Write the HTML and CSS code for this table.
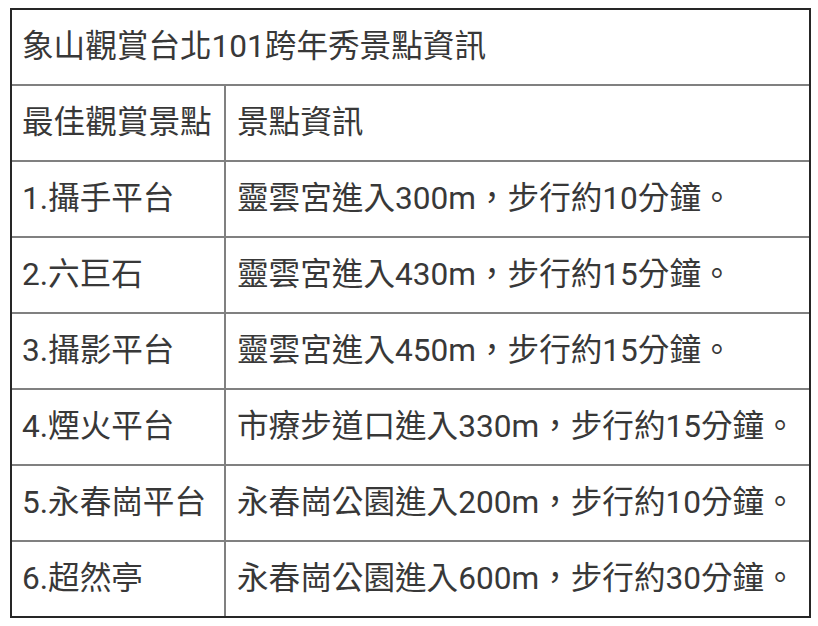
FILE: index.html
```html
<!DOCTYPE html>
<html lang="zh-Hant">
<head>
<meta charset="utf-8">
<link rel="stylesheet" href="styles.css">
</head>
<body>
<table class="info">
  <colgroup><col class="c1"><col class="c2"></colgroup>
  <tr><td class="title" colspan="2">象山觀賞台北101跨年秀景點資訊</td></tr>
  <tr><td>最佳觀賞景點</td><td>景點資訊</td></tr>
  <tr><td>1.攝手平台</td><td>靈雲宮進入300m，步行約10分鐘。</td></tr>
  <tr><td>2.六巨石</td><td>靈雲宮進入430m，步行約15分鐘。</td></tr>
  <tr><td>3.攝影平台</td><td>靈雲宮進入450m，步行約15分鐘。</td></tr>
  <tr><td>4.煙火平台</td><td>市療步道口進入330m，步行約15分鐘。</td></tr>
  <tr><td>5.永春崗平台</td><td>永春崗公園進入200m，步行約10分鐘。</td></tr>
  <tr><td>6.超然亭</td><td>永春崗公園進入600m，步行約30分鐘。</td></tr>
</table>
</body>
</html>
```
FILE: styles.css
```css
html, body {
  margin: 0;
  padding: 0;
  background: #ffffff;
}
body {
  padding: 8px 0 0 10px;
}
.info {
  width: 801px;
  border-collapse: separate;
  border-spacing: 0;
  border: 2px solid #262626;
  table-layout: fixed;
  font-family: Roboto, "Noto Sans CJK TC", sans-serif;
  font-size: 31.6px;
  font-weight: 400;
  color: #383838;
}
.c1 { width: 212px; }
.c2 { width: 585px; }
.info td {
  height: 74px;
  padding: 0 0 0 10px;
  box-sizing: border-box;
  vertical-align: middle;
  line-height: 40px;
  white-space: nowrap;
  border-top: 2px solid #808080;
}
.info tr:first-child td {
  border-top: none;
  height: 74px;
}
.info td + td {
  border-left: 2px solid #808080;
  padding-left: 11px;
}
.info tr:not(:first-child) td {
  height: 76px;
}
```
